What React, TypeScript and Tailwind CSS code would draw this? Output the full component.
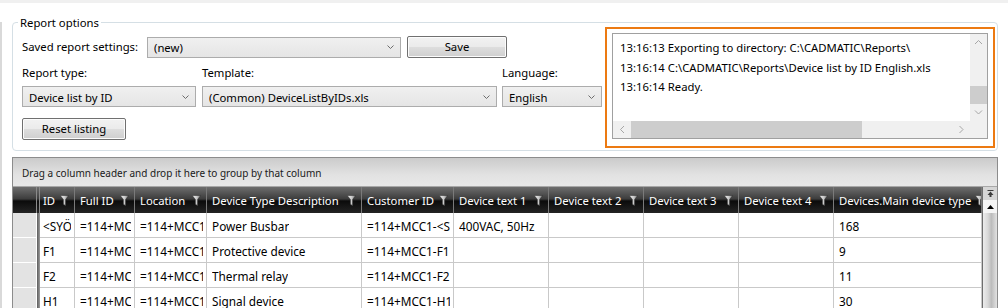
import type { ReactNode } from 'react';

type Col = { title: string; w: string; first?: boolean };

const cols: Col[] = [
  { title: 'ID', w: 'w-[35px]', first: true },
  { title: 'Full ID', w: 'w-[60px]' },
  { title: 'Location', w: 'w-[72px]' },
  { title: 'Device Type Description', w: 'w-[155px]' },
  { title: 'Customer ID', w: 'w-[92px]' },
  { title: 'Device text 1', w: 'w-[95px]' },
  { title: 'Device text 2', w: 'w-[95px]' },
  { title: 'Device text 3', w: 'w-[95px]' },
  { title: 'Device text 4', w: 'w-[95px]' },
  { title: 'Devices.Main device type', w: 'w-[148px]' },
];

const rows: string[][] = [
  ['<SYÖTÄ>', '=114+MCC1-<SYÖTÄ>', '=114+MCC1', 'Power Busbar', '=114+MCC1-<SYÖTÄ>', '400VAC, 50Hz', '', '', '', '168'],
  ['F1', '=114+MCC1-F1', '=114+MCC1', 'Protective device', '=114+MCC1-F1', '', '', '', '', '9'],
  ['F2', '=114+MCC1-F2', '=114+MCC1', 'Thermal relay', '=114+MCC1-F2', '', '', '', '', '11'],
  ['H1', '=114+MCC1-H1', '=114+MCC1', 'Signal device', '=114+MCC1-H1', '', '', '', '', '30'],
];

const logLines = [
  '13:16:13 Exporting to directory: C:\\CADMATIC\\Reports\\',
  '13:16:14 C:\\CADMATIC\\Reports\\Device list by ID English.xls',
  '13:16:14 Ready.',
];

function Chevron({ dir, color = '#a6a6a6' }: { dir: 'up' | 'down' | 'left' | 'right'; color?: string }) {
  const d = {
    up: 'M1 5 L4.5 1.5 L8 5',
    down: 'M1 1.5 L4.5 5 L8 1.5',
    left: 'M5 1 L1.5 4.5 L5 8',
    right: 'M1.5 1 L5 4.5 L1.5 8',
  }[dir];
  const vertical = dir === 'up' || dir === 'down';
  return (
    <svg width={vertical ? 9 : 7} height={vertical ? 7 : 9} viewBox={vertical ? '0 0 9 7' : '0 0 7 9'}>
      <path d={d} fill="none" stroke={color} strokeWidth="1" />
    </svg>
  );
}

function Combo({ value, className }: { value: string; className: string }) {
  return (
    <div className={`flex items-center h-[21px] border border-[#acacac] bg-[linear-gradient(to_bottom,#f0f0f0,#e5e5e5)] pl-[6px] pr-[6px] ${className}`}>
      <span className="flex-1 min-w-0 whitespace-nowrap overflow-hidden leading-[19px] pt-[1px]">{value}</span>
      <svg width="7" height="4" viewBox="0 0 7 4" className="shrink-0">
        <path d="M0.5 0.5 L3.5 3.5 L6.5 0.5" fill="none" stroke="#6d6d6d" strokeWidth="1" />
      </svg>
    </div>
  );
}

function WinButton({ children, className }: { children: ReactNode; className: string }) {
  return (
    <button className={`h-[22px] border border-[#707070] rounded-[2px] shadow-[inset_0_0_0_1px_#fcfcfc] bg-[linear-gradient(to_bottom,#f2f2f2_0%,#ebebeb_48%,#dddddd_52%,#cfcfcf_100%)] text-center text-black ${className}`}>
      {children}
    </button>
  );
}

function FilterIcon() {
  return (
    <svg width="9" height="11" viewBox="0 0 9 11" className="shrink-0">
      <defs>
        <linearGradient id="fgrad" x1="0" y1="0" x2="1" y2="0">
          <stop offset="0" stopColor="#f4f4f4" />
          <stop offset="0.55" stopColor="#c8c8c8" />
          <stop offset="1" stopColor="#707070" />
        </linearGradient>
      </defs>
      <path d="M0.3 0.5 H8.7 L5.6 4.5 V10.7 L3.4 9.2 V4.5 Z" fill="url(#fgrad)" stroke="#2a2a2a" strokeWidth="0.5" />
    </svg>
  );
}

function ReportOptions() {
  return (
    <div className="relative mt-[19px] w-[986px] h-[129px] border border-[#d5dfe5] rounded-[4px] flex">
      <span className="absolute left-[5px] -top-[8px] px-[2px] bg-white leading-[15px]">Report options</span>

      <div className="w-[592px] pl-[9px] pt-[13px] flex flex-col">
        <div className="flex items-center h-[22px]">
          <span className="w-[125px]">Saved report settings:</span>
          <Combo value="(new)" className="w-[254px]" />
          <WinButton className="ml-[6px] w-[100px]">Save</WinButton>
        </div>

        <div className="mt-[7px] h-[16px] flex items-center">
          <span className="w-[180px]">Report type:</span>
          <span className="w-[300px]">Template:</span>
          <span>Language:</span>
        </div>

        <div className="mt-[5px] flex">
          <Combo value="Device list by ID" className="w-[174px]" />
          <Combo value="(Common) DeviceListByIDs.xls" className="ml-[6px] w-[295px]" />
          <Combo value="English" className="ml-[5px] w-[100px]" />
        </div>

        <div className="mt-[11px]">
          <WinButton className="w-[104px]">Reset listing</WinButton>
        </div>
      </div>

      {/* export log */}
      <div className="mt-[4px] w-[390px] h-[121px] border-2 border-[#ec7a12] pt-[4px] px-[5px] pb-[7px] flex">
        <div className="flex-1 border border-[#a0a0a0] flex flex-col bg-white">
          <div className="flex-1 flex">
            <div className="flex-1 pl-[7px] pt-[4px] leading-[19.5px] whitespace-nowrap">
              {logLines.map(l => (
                <div key={l}>{l}</div>
              ))}
            </div>
            <div className="w-[17px] bg-[#f0f0f0] flex flex-col">
              <div className="h-[17px] flex items-center justify-center"><Chevron dir="up" /></div>
              <div className="flex-1 flex flex-col justify-end">
                <div className="h-[18px] bg-[#cdcdcd]" />
              </div>
              <div className="h-[17px] flex items-center justify-center"><Chevron dir="down" /></div>
            </div>
          </div>
          <div className="h-[17px] flex">
            <div className="flex-1 bg-[#f0f0f0] flex">
              <div className="w-[18px] flex items-center justify-center"><Chevron dir="left" /></div>
              <div className="w-[231px] bg-[#cdcdcd]" />
              <div className="flex-1" />
              <div className="w-[17px] flex items-center justify-center"><Chevron dir="right" /></div>
            </div>
            <div className="w-[17px] bg-[#f0f0f0]" />
          </div>
        </div>
      </div>
    </div>
  );
}

function DeviceGrid() {
  return (
    <div className="mt-[6px] w-[986px] h-[160px] border border-[#8c8c8c] flex flex-col">
      <div className="h-[29px] shrink-0 flex items-center pl-[9px] pt-[1px] text-[10px] text-[#1a1a1a] bg-[linear-gradient(to_bottom,#cbcbcb,#e2e2e2_60%,#e8e8e8)] border-b border-[#a8a8a8]">
        Drag a column header and drop it here to group by that column
      </div>

      <div className="flex flex-1">
        <div className="flex flex-col">
          {/* header */}
          <div className="flex h-[26px] text-white bg-[linear-gradient(to_bottom,#6e6e6e_0%,#3c3c3c_46%,#0b0b0b_54%,#242424_100%)]">
            <div className="w-[24px] border-r border-[#8a8a8a]" />
            <div className="w-[3px] border-r border-[#8a8a8a]" />
            {cols.map(c => (
              <div key={c.title} className={`${c.w} shrink-0 flex items-center overflow-hidden border-r border-[#7a7a7a] pr-[5px] pt-[1px] ${c.first ? 'pl-[3px]' : 'pl-[5px]'}`}>
                <span className="whitespace-nowrap shrink-0">{c.title}</span>
                <span className="ml-auto pl-[4px] flex shrink-0"><FilterIcon /></span>
              </div>
            ))}
          </div>

          {rows.map((r, i) => (
            <div key={i} className="flex h-[25px] shrink-0">
              <div className="w-[24px] bg-[#e3e3e3] border-r border-b border-white" />
              <div className="w-[3px] bg-[linear-gradient(to_right,#5c5c5c,#9c9c9c)]" />
              {cols.map((c, j) => (
                <div key={c.title} className={`${c.w} shrink-0 flex items-center border-r border-b border-[#c9c9c9] pr-[3px] pt-[2px] text-[11.8px] ${c.first ? 'pl-[3px]' : 'pl-[5px]'}`}>
                  <span className="min-w-0 whitespace-nowrap overflow-hidden leading-[16px]">{r[j]}</span>
                </div>
              ))}
            </div>
          ))}
        </div>

        {/* vertical scrollbar */}
        <div className="w-[15px] flex flex-col border-l border-[#6e6e6e]">
          <div className="h-[13px] bg-[#d6d6d6] flex items-center justify-center">
            <svg width="7" height="7" viewBox="0 0 7 7">
              <rect x="0.5" y="0" width="6" height="1" fill="#3c3c3c" />
              <path d="M3.5 1.5 L6.5 5 H4.5 V7 H2.5 V5 H0.5 Z" fill="#3c3c3c" />
            </svg>
          </div>
          <div className="h-[13px] bg-[#f5f5f5] flex items-center justify-center">
            <svg width="7" height="4" viewBox="0 0 7 4">
              <path d="M3.5 0 L7 4 H0 Z" fill="#000" />
            </svg>
          </div>
          <div className="flex-1 bg-[linear-gradient(to_right,#ececec,#d8d8d8_35%,#bcbcbc_60%,#d4d4d4_85%,#e2e2e2)]" />
        </div>
      </div>
    </div>
  );
}

export default function App() {
  return (
    <div className="w-[1008px] h-[308px] overflow-hidden bg-white text-black font-['Noto_Sans',sans-serif] text-[11.3px] leading-none">
      <div className="h-[3px] bg-[#f0f0f0]" />
      <div className="h-[305px] border-l-2 border-[#d9d9d9] pl-[10px]">
        <ReportOptions />
        <DeviceGrid />
      </div>
    </div>
  );
}
